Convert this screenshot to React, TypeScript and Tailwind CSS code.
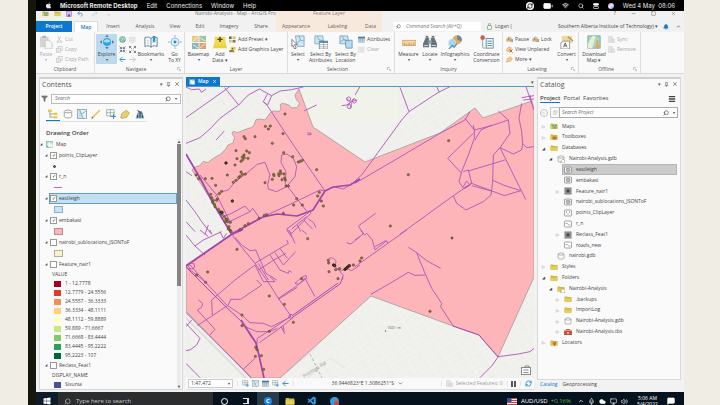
import React from "react";
import {
  Battery,
  ChevronDown,
  ChevronUp,
  Cloud,
  Minus,
  Monitor,
  Pin,
  RefreshCw,
  Search,
  Square,
  Volume2,
  Wifi,
  X,
  Filter,
  Menu,
  Bell,
  MessageSquare,
  Mic,
} from "lucide-react";
import { FaApple, FaWindows } from "react-icons/fa";
import { VscVscode } from "react-icons/vsc";

/* ---------- small drawings ---------- */

type Kind =
  | "paste" | "explore" | "bookmarks" | "goto" | "basemap" | "adddata" | "select" | "selattr" | "selloc"
  | "measure" | "locate" | "info" | "coord" | "convert" | "download" | "cut" | "copy" | "globe" | "zoomin"
  | "zoomout" | "back" | "fwd" | "preset" | "graphics" | "table" | "clear" | "label" | "labelx" | "labelmore"
  | "sync" | "maplet" | "tree" | "cylinder" | "polymap" | "pencil" | "gridplus" | "tag" | "chartmap"
  | "folder" | "foldermap" | "foldertool" | "folderhome" | "folderloc" | "polygon" | "raster" | "points"
  | "lines" | "toolbox" | "launcher" | "save" | "undo" | "redo" | "dbhome";

function Folder({ children }: { children?: React.ReactNode }) {
  return (
    <>
      <path d="M1 3h5l1 1h8v9H1z" fill="#cdb945" />
      <path d="M1 7h14v7H1z" fill="#e3cf58" />
      {children}
    </>
  );
}

function Cylinder({ color = "#8a8a8a" }: { color?: string }) {
  return (
    <g fill="#fafafa" stroke={color} strokeWidth="1.2">
      <path d="M2 4v8c0 3 12 3 12 0V4" />
      <ellipse cx="8" cy="4" rx="6" ry="2.2" />
    </g>
  );
}

const drawings: Record<Kind, React.ReactNode> = {
  paste: (
    <>
      <rect x="1" y="2" width="10" height="12" fill="#d4d4d4" />
      <rect x="4" y="1" width="4" height="2" fill="#aaa" />
      <path d="M7 6h5l3 3v7H7z" fill="#f5f5f5" stroke="#bbb" strokeWidth=".8" />
    </>
  ),
  explore: (
    <>
      <circle cx="8" cy="8" r="4.6" fill="#2ea3dd" />
      <path d="M4 7c2-3 6-3 8 0-2 2-6 2-8 0z" fill="#a5dcf5" />
      <path d="M8 0l2 2H6zM8 16l2-2H6zM0 8l2-2v4zM16 8l-2-2v4z" fill="#4a5560" />
    </>
  ),
  bookmarks: (
    <>
      <path d="M1 3c3-1 5-1 7 1 2-2 4-2 7-1v10c-3-1-5-1-7 1-2-2-4-2-7-1z" fill="#fff" stroke="#4a7894" />
      <path d="M8 4v10" stroke="#4a7894" />
      <path d="M10 1h3v8l-1.500-1.500L10 9z" fill="#3b8fc7" />
      <path d="M3 6h3M3 8h3M3 10h3" stroke="#aac" strokeWidth=".7" />
    </>
  ),
  goto: (
    <>
      <circle cx="8" cy="8" r="4.500" fill="#e6f3fb" stroke="#7cb5d8" />
      <circle cx="8" cy="8" r="1.700" fill="#2b8ac9" />
      <path d="M8 0v3M8 13v3M0 8h3M13 8h3" stroke="#7cb5d8" />
    </>
  ),
  basemap: (
    <>
      <rect x="0" y="1" width="7.500" height="7" fill="#e7c987" />
      <rect x="8.500" y="1" width="7.500" height="7" fill="#9fc4a6" />
      <rect x="0" y="9" width="7.500" height="7" fill="#87b4c4" />
      <rect x="8.500" y="9" width="7.500" height="7" fill="#e0a06c" />
      <path d="M1 7l6-5M9 3l6 4M1 11l6 4M9 15l6-5" stroke="#f8f2dc" />
    </>
  ),
  adddata: (
    <>
      <path d="M3 4h10l3 11H0z" fill="#ecd23c" />
      <path d="M2 2h12v10H2z" fill="#f0da50" />
      <path d="M8 2v6M5 5h6" stroke="#4a4a30" strokeWidth="1.700" />
    </>
  ),
  select: (
    <>
      <path d="M5 1h10v12H7z" fill="#cfe6f3" stroke="#6c98af" strokeWidth=".8" />
      <path d="M9 1l2 5 4 1M7 9l4-3" stroke="#6c98af" strokeWidth=".8" fill="none" />
      <path d="M1 5l6 6H4l2 4-2 1-1.500-4L1 13z" fill="#fff" stroke="#555" strokeWidth=".8" />
    </>
  ),
  selattr: (
    <>
      <path d="M1 1h9l1 9H1z" fill="#cfe6f3" stroke="#6c98af" strokeWidth=".8" />
      <path d="M4 1l1 4 6 2" stroke="#6c98af" strokeWidth=".8" fill="none" />
      <rect x="6" y="7" width="10" height="9" fill="#fff" stroke="#607c8c" strokeWidth=".8" />
      <path d="M6 8h10" stroke="#4c87a8" strokeWidth="2" />
      <path d="M6 11h10M6 13.500h10M11 9v7" stroke="#888" strokeWidth=".7" />
    </>
  ),
  selloc: (
    <>
      <path d="M1 1h9l1 9H1z" fill="#cfe6f3" stroke="#6c98af" strokeWidth=".8" />
      <path d="M7 6h8v9H8z" fill="#b6dcef" stroke="#4f8cad" strokeWidth=".8" />
      <path d="M4 1l1 4 6 2M1 8l5-3" stroke="#6c98af" strokeWidth=".8" fill="none" />
    </>
  ),
  measure: (
    <>
      <rect x="0" y="6" width="16" height="6" fill="#f1d3a6" stroke="#cf9c5e" strokeWidth=".8" />
      <path d="M2.500 9v3M5 10v2M8 9v3M10.500 10v2M13.500 9v3" stroke="#b27a3d" strokeWidth=".8" />
    </>
  ),
  locate: (
    <g fill="#68747c">
      <path d="M3 3h4v11H0v-4z" />
      <path d="M13 3H9v11h7v-4z" />
      <rect x="6" y="6" width="4" height="4" fill="#93a2ab" />
      <rect x="3" y="1" width="3" height="2" />
      <rect x="10" y="1" width="3" height="2" />
      <path d="M1 12h5M10 12h5" stroke="#dfe5e8" />
    </g>
  ),
  info: (
    <>
      <circle cx="10.500" cy="5.500" r="5.300" fill="#f0a54a" />
      <path d="M10.500 5.500V.2A5.300 5.300 0 0 1 15.500 7z" fill="#4b8cc2" />
      <circle cx="5" cy="9" r="4.500" fill="#a9d6ee" />
      <path d="M1 16l4-4 2 2 3-4" stroke="#4f9ac8" strokeWidth="1.500" fill="none" />
    </>
  ),
  coord: (
    <>
      <circle cx="3" cy="3" r="2.600" fill="#d35b3e" />
      <path d="M3 5v8c0 2 1 2 3 2" stroke="#7b98ac" fill="none" />
      <rect x="7" y="4" width="8" height="11" fill="#eef5f9" stroke="#5c87a1" />
      <path d="M8.500 7h5M8.500 9.500h5M8.500 12h5" stroke="#5c87a1" />
    </>
  ),
  convert: (
    <>
      <path d="M2 1h12v8H2z" fill="#ecd89c" />
      <path d="M9 2l6 5" stroke="#b89a4c" strokeWidth="1.500" />
      <path d="M1 9l3-2h7v9H1z" fill="#fff" stroke="#777" strokeWidth=".8" />
      <path d="M4 14l2-5 2 5M5 12.500h2" stroke="#444" strokeWidth=".9" fill="none" />
    </>
  ),
  download: (
    <>
      <rect x="1" y="1" width="14" height="14" fill="#a6d6c7" stroke="#5d988a" strokeWidth=".8" />
      <path d="M1 10l5-9h4l-4 14H1z" fill="#e7efd4" />
      <path d="M13 6v6h2l-3 4-3-4h2V6z" fill="#f1a23c" />
    </>
  ),
  cut: (
    <g fill="none" stroke="#b5b5b5" strokeWidth="1.400">
      <path d="M4 1l6 10M11 1L5 11" />
      <circle cx="4" cy="13" r="2" />
      <circle cx="11" cy="13" r="2" />
    </g>
  ),
  copy: (
    <g fill="#f4f4f4" stroke="#b9b9b9" strokeWidth="1.200">
      <rect x="5" y="1" width="9" height="10" />
      <rect x="1" y="5" width="9" height="10" />
      <path d="M3 9h5M3 12h5" />
    </g>
  ),
  globe: (
    <>
      <circle cx="8" cy="8" r="7" fill="#7fbfa5" stroke="#5d8f95" />
      <path d="M3 5c3-3 4 0 5 2s-2 4-3 5M11 3c0 4 2 5 3 6" stroke="#e8f4ea" strokeWidth="1.500" fill="none" />
    </>
  ),
  zoomin: <path d="M1 1l5 5M15 1l-5 5M1 15l5-5M15 15l-5-5M6 2v4H2M10 2v4h4M6 14v-4H2M10 14v-4h4" stroke="#4a4a4a" strokeWidth="1.500" fill="none" />,
  zoomout: <path d="M1 1l5 5M15 1l-5 5M1 15l5-5M15 15l-5-5M1 5V1h4M15 5V1h-4M1 11v4h4M15 11v4h-4" stroke="#4a4a4a" strokeWidth="1.500" fill="none" />,
  back: <path d="M15 8H2M8 2L2 8l6 6" stroke="#2c95d4" strokeWidth="2.200" fill="none" />,
  fwd: <path d="M1 8h13M8 2l6 6-6 6" stroke="#bdbdbd" strokeWidth="1.800" fill="none" />,
  preset: (
    <>
      <rect x="0" y="1" width="6" height="6" fill="#666" />
      <rect x="8" y="1" width="7" height="6" fill="#d9c55c" />
      <rect x="0" y="9" width="6" height="6" fill="#d9c55c" />
      <rect x="8" y="9" width="7" height="6" fill="#777" />
    </>
  ),
  graphics: (
    <>
      <path d="M4 2h11v8H4z" fill="#e8cf4d" />
      <path d="M1 9h9l3 5H0z" fill="#8d8750" />
      <path d="M8 4v4M6 6h4" stroke="#444" strokeWidth="1.200" />
    </>
  ),
  table: (
    <>
      <rect x="0" y="2" width="16" height="12" fill="#dfeaf1" stroke="#5f7f91" />
      <path d="M0 4h16" stroke="#3f6f8c" strokeWidth="3" />
      <path d="M0 9h16M5 5v9M10 5v9" stroke="#5f7f91" />
    </>
  ),
  clear: <path d="M1 3h13v11H1zM5 6h5v5H5z" stroke="#c3c3c3" fill="#f4f4f4" />,
  label: (
    <>
      <path d="M1 8l5-6 6 2-1 8H2z" fill="#efd08b" stroke="#b08c46" />
      <path d="M4 10l2-5 2 5M12 7v7M15 7v7" stroke="#555" strokeWidth="1.300" fill="none" />
    </>
  ),
  labelx: (
    <>
      <path d="M1 8l5-6 6 2-1 8H2z" fill="#efd08b" stroke="#b08c46" />
      <path d="M8 8l7 7M15 8l-7 7" stroke="#c8472f" strokeWidth="2" />
    </>
  ),
  labelmore: <path d="M1 14l2-8 7-4 5 4-5 6z" fill="#ecd08c" stroke="#b08c46" />,
  sync: <path d="M1 1h9v13H1zM7 7h8v8H7z" fill="#e3e3e3" stroke="#cdcdcd" />,
  maplet: (
    <>
      <rect x="1" y="1" width="14" height="14" fill="#b9dccb" stroke="#5f9990" />
      <path d="M2 10l5-8 3 5 5-3v10H8z" fill="#f4faf2" />
      <path d="M2 14V9l3 3z" fill="#69b088" />
    </>
  ),
  tree: (
    <>
      <path d="M3 5v8h6M3 8h6" stroke="#777" fill="none" />
      <rect x="0" y="1" width="6" height="4" fill="#eac63d" />
      <rect x="9" y="6" width="6" height="3.500" fill="#eac63d" />
      <rect x="9" y="11.500" width="6" height="3.500" fill="#eac63d" />
    </>
  ),
  cylinder: <Cylinder />,
  polymap: (
    <>
      <rect x="1" y="1" width="14" height="14" fill="#e5f1f8" stroke="#77848c" />
      <path d="M2 2l4 1 3 11H2z" fill="#c4dfee" />
      <path d="M4 1l3 7 8-5M7 8l3 7" stroke="#5c8cab" fill="none" />
    </>
  ),
  pencil: (
    <>
      <path d="M2 14L14 2" stroke="#e0c148" strokeWidth="2.400" />
      <path d="M1 15l2-2" stroke="#555" strokeWidth="2" />
    </>
  ),
  gridplus: (
    <>
      <path d="M1 1h12v10H1zM7 1v12M1 6h13" stroke="#7f8d97" fill="none" />
      <path d="M12 8v8M8 12h8" stroke="#3a8dc5" strokeWidth="1.600" />
    </>
  ),
  tag: <path d="M1 14l2-7 7-5 5 4-4 7-7 2z" fill="#ebcf6e" stroke="#b0924a" />,
  chartmap: (
    <>
      <path d="M1 15l4-12h6l4 12z" fill="#87a8b6" />
      <path d="M3 14V9h2v5M7 14V5h2v9M11 14v-4h2v4" fill="#385b70" />
      <path d="M4 2l8 6" stroke="#444" strokeWidth="1.600" />
    </>
  ),
  folder: <Folder />,
  foldermap: (
    <Folder>
      <rect x="5" y="6" width="8" height="7" fill="#5f9a6a" />
      <path d="M6 12l3-5 3 4" stroke="#fff" fill="none" />
    </Folder>
  ),
  foldertool: (
    <Folder>
      <rect x="5" y="7" width="8" height="6" fill="#cf6a2d" />
    </Folder>
  ),
  folderhome: (
    <Folder>
      <path d="M8 11l4-4 4 4v5H8z" fill="#fff" stroke="#666" />
    </Folder>
  ),
  folderloc: (
    <Folder>
      <circle cx="9" cy="9" r="3.500" fill="#cc6d3b" />
      <path d="M9 15l-2-4h4z" fill="#cc6d3b" />
    </Folder>
  ),
  polygon: (
    <>
      <rect x="1" y="2" width="14" height="12" rx="1.500" fill="#eee" stroke="#777" strokeWidth="1.300" />
      <path d="M5 5l6 0 1 5-5 2-2-3z" fill="#bbb" stroke="#777" />
    </>
  ),
  raster: (
    <>
      <rect x="1" y="1" width="14" height="14" fill="#777" />
      <path d="M1 4.500h14M1 8h14M1 11.500h14M4.500 1v14M8 1v14M11.500 1v14" stroke="#c9c9c9" strokeWidth=".8" />
      <rect x="5" y="5" width="6" height="6" fill="#444" />
    </>
  ),
  points: (
    <>
      <rect x="1" y="2" width="14" height="12" rx="1.500" fill="#fff" stroke="#777" strokeWidth="1.300" />
      <path d="M4 5h2v2H4zM10 5h2v2h-2zM7 9h2v2H7z" fill="#666" />
    </>
  ),
  lines: (
    <>
      <rect x="1" y="2" width="14" height="12" rx="1.500" fill="#fff" stroke="#777" strokeWidth="1.300" />
      <path d="M3 7h4l2 3h4" stroke="#666" fill="none" />
    </>
  ),
  toolbox: (
    <>
      <rect x="0" y="5" width="16" height="9" rx="1" fill="#cd4f38" />
      <path d="M5 5V3h6v2" stroke="#a83a28" strokeWidth="1.500" fill="none" />
      <rect x="6" y="8" width="4" height="3" fill="#f4d5cd" />
    </>
  ),
  launcher: <path d="M2 12V2h10M7 7l7 7M14 9v5H9" stroke="#777" strokeWidth="1.600" fill="none" />,
  save: (
    <>
      <rect x="1" y="1" width="14" height="14" fill="#d5c3ea" stroke="#7450a5" />
      <rect x="5" y="9" width="6" height="6" fill="#7450a5" />
    </>
  ),
  undo: <path d="M3 6h7c6 0 5 8 0 8M7 1L2 6l5 5" stroke="#3b93d1" strokeWidth="2.200" fill="none" />,
  redo: <path d="M13 6H6c-6 0-5 8 0 8M9 1l5 5-5 5" stroke="#b4d3e8" strokeWidth="2.200" fill="none" />,
  dbhome: (
    <>
      <Cylinder />
      <path d="M8 12l4-4 4 4v4H8z" fill="#fff" stroke="#9b6b3c" />
    </>
  ),
};

function Pic({ kind, className = "size-[7px]" }: { kind: Kind; className?: string }) {
  return (
    <svg viewBox="0 0 16 16" className={`shrink-0 ${className}`} aria-hidden="true">
      {drawings[kind]}
    </svg>
  );
}

/* ---------- macOS menu bar ---------- */

function MenuBar() {
  return (
    <header className="flex h-[11px] shrink-0 items-center bg-black pr-[9px] pl-[9px] font-['Inter','Noto_Sans',sans-serif] text-[6px] leading-[11px] text-[#e8e8e8]">
      <FaApple className="size-[7px] shrink-0" />
      <nav className="ml-[8px] flex gap-[9px] whitespace-nowrap">
        <button className="font-bold">Microsoft Remote Desktop</button>
        <button>Edit</button>
        <button>Connections</button>
        <button>Window</button>
        <button>Help</button>
      </nav>
      <div className="ml-auto flex items-center gap-[9px] whitespace-nowrap">
        <span className="flex size-[8px] items-center justify-center rounded-full bg-white text-black">
          <RefreshCw className="size-[6px]" strokeWidth={3} />
        </span>
        <Battery className="size-[10px]" fill="#fff" />
        <Wifi className="size-[7px]" strokeWidth={3} />
        <Search className="size-[6px]" strokeWidth={2.5} />
        <svg viewBox="0 0 16 16" className="size-[6px]" fill="none" stroke="#fff" strokeWidth="2">
          <rect x="1" y="1" width="14" height="5" rx="2.500" fill="#fff" />
          <rect x="1" y="9" width="14" height="6" rx="3" />
        </svg>
        <span className="size-[6px] rounded-full bg-linear-to-br from-[#e95fa0] via-[#e8e8ff] to-[#3f7ce0]" />
        <span>Wed 4 May&nbsp; 08:06</span>
      </div>
    </header>
  );
}

/* ---------- title and tab strip ---------- */

function Tab({ children, width }: { children: string; width: string }) {
  return <button className={`h-full text-center text-[#555] ${width}`}>{children}</button>;
}

function TitleAndTabs() {
  return (
    <div className="flex h-[21px] shrink-0 bg-[#f1f1f1] text-[5px] whitespace-nowrap">
      <div className="flex w-[240px] shrink-0 flex-col">
        <div className="flex h-[10px] items-start overflow-hidden pl-[6px] text-[#777]">
          <div className="flex h-[6px] items-end gap-[5px]">
            <Pic kind="foldermap" />
            <Pic kind="folder" />
            <Pic kind="save" className="size-[6px]" />
            <Pic kind="undo" className="size-[6px]" />
            <Pic kind="redo" className="ml-[4px] size-[6px]" />
            <ChevronDown className="ml-[4px] size-[4px]" />
          </div>
          <span className="ml-auto leading-[5px]">Nairobi-Analysis - Map - ArcGIS Pro</span>
        </div>
        <div className="flex h-[11px] leading-[11px]">
          <button className="w-[36px] bg-[#0b78d0] text-center font-semibold text-white">Project</button>
          <button className="ml-[2px] w-[24px] border border-b-0 border-[#dcdcdc] bg-white text-center font-semibold text-[#1478c8]">
            Map
          </button>
          <Tab width="w-[30px]">Insert</Tab>
          <Tab width="w-[34px]">Analysis</Tab>
          <Tab width="w-[26px]">View</Tab>
          <Tab width="w-[24px]">Edit</Tab>
          <Tab width="w-[34px]">Imagery</Tab>
          <Tab width="w-[30px]">Share</Tab>
        </div>
      </div>
      <div className="flex w-[106px] shrink-0 flex-col bg-[#f8e9dd]">
        <div className="h-[10px] overflow-hidden text-center leading-[5px] text-[#8a7d74]">Feature Layer</div>
        <div className="flex h-[11px] justify-between px-[6px] leading-[11px] text-[#666]">
          <button>Appearance</button>
          <button>Labeling</button>
          <button>Data</button>
        </div>
      </div>
      <div className="flex min-w-0 flex-1 flex-col">
        <div className="flex h-[10px] items-start justify-end gap-[15px] overflow-hidden pr-[8px] text-[#555]">
          <span className="leading-[5px]">?</span>
          <Minus className="size-[5px]" />
          <Square className="size-[5px]" />
          <X className="size-[5px]" />
        </div>
        <div className="flex h-[11px] items-center">
          <label className="ml-[11px] flex h-[9px] w-[88px] items-center gap-[5px] bg-white pl-[3px]">
            <Search className="size-[5px] shrink-0 -scale-x-100 text-[#555]" strokeWidth={2.5} />
            <input
              aria-label="Command Search"
              placeholder="Command Search (Alt+Q)"
              className="w-full min-w-0 bg-transparent italic outline-none placeholder:text-[#777]"
            />
          </label>
          <div className="ml-[6px] flex items-center gap-[3px] text-[#555]">
            <svg viewBox="0 0 10 14" className="h-[7px] w-[5px]" fill="none" stroke="#55a86c" strokeWidth="1.500">
              <circle cx="5" cy="3" r="2" />
              <rect x="1" y="5" width="8" height="8" rx="2" />
            </svg>
            Logan (
          </div>
          <div className="ml-auto flex items-center gap-[3px] pr-[3px] text-[#444]">
            <button>Southern Alberta Institute of Technology) ▾</button>
            <Bell className="ml-[2px] size-[6px] text-[#1478c8]" fill="#1478c8" />
            <ChevronUp className="ml-[4px] size-[5px]" strokeWidth={3} />
          </div>
        </div>
      </div>
    </div>
  );
}

/* ---------- ribbon ---------- */

function Group({ name, width, launcher, children }: { name: string; width: string; launcher?: boolean; children: React.ReactNode }) {
  return (
    <section className={`flex shrink-0 flex-col border-r border-[#dedede] ${width}`}>
      <div className="flex h-[33px] items-start pt-[2px]">{children}</div>
      <div className="flex h-[7px] items-center text-[#555]">
        <span className="flex-1 text-center">{name}</span>
        {launcher && <Pic kind="launcher" className="mr-[3px] size-[4px]" />}
      </div>
    </section>
  );
}

function Big({ kind, lines, width, active, muted, drop }: { kind: Kind; lines: string[]; width: string; active?: boolean; muted?: boolean; drop?: boolean }) {
  return (
    <button
      className={`flex h-[30px] shrink-0 flex-col items-center pt-px leading-[6px] ${width} ${active ? "bg-[#bcd9ee]" : ""} ${muted ? "text-[#aaa]" : "text-[#444]"}`}
    >
      <Pic kind={kind} className="mb-[2px] size-[14px]" />
      {lines.map((line) => (
        <span key={line}>{line}</span>
      ))}
      {drop && <span className="text-[4px] leading-[5px]">▾</span>}
    </button>
  );
}

function Small({ kind, label, muted }: { kind: Kind; label: string; muted?: boolean }) {
  return (
    <button className={`flex h-[10px] items-center gap-[2px] ${muted ? "text-[#aaa]" : "text-[#444]"}`}>
      <Pic kind={kind} />
      {label}
    </button>
  );
}

function Ribbon() {
  return (
    <div className="flex h-[42px] shrink-0 border-b border-[#d8d8d8] bg-[#f9f9f9] text-[5px] leading-[6px] whitespace-nowrap">
      <Group name="Clipboard" width="w-[59px]">
        <Big kind="paste" lines={["Paste"]} width="w-[20px]" muted drop />
        <div>
          <Small kind="cut" label="Cut" muted />
          <Small kind="copy" label="Copy" muted />
          <Small kind="copy" label="Copy Path" muted />
        </div>
      </Group>
      <Group name="Navigate" width="w-[90px]" launcher>
        <Big kind="explore" lines={["Explore"]} width="w-[21px] ml-px" active drop />
        <div className="grid h-[30px] w-[20px] grid-cols-2 place-items-center">
          <Pic kind="globe" />
          <Pic kind="clear" />
          <Pic kind="zoomin" />
          <Pic kind="zoomout" />
          <Pic kind="back" />
          <Pic kind="fwd" />
        </div>
        <Big kind="bookmarks" lines={["Bookmarks"]} width="w-[28px]" drop />
        <Big kind="goto" lines={["Go", "To XY"]} width="w-[19px]" />
      </Group>
      <Group name="Layer" width="w-[103px]">
        <Big kind="basemap" lines={["Basemap"]} width="w-[25px] ml-px" drop />
        <Big kind="adddata" lines={["Add", "Data ▾"]} width="w-[18px]" />
        <div>
          <Small kind="preset" label="Add Preset ▾" />
          <Small kind="graphics" label="Add Graphics Layer" />
        </div>
      </Group>
      <Group name="Selection" width="w-[107px]" launcher>
        <Big kind="select" lines={["Select"]} width="w-[20px]" drop />
        <Big kind="selattr" lines={["Select By", "Attributes"]} width="w-[25px]" />
        <Big kind="selloc" lines={["Select By", "Location"]} width="w-[25px]" />
        <div>
          <Small kind="table" label="Attributes" />
          <Small kind="clear" label="Clear" muted />
        </div>
      </Group>
      <Group name="Inquiry" width="w-[108px]">
        <Big kind="measure" lines={["Measure"]} width="w-[25px] ml-px" drop />
        <Big kind="locate" lines={["Locate"]} width="w-[18px]" drop />
        <Big kind="info" lines={["Infographics"]} width="w-[32px]" drop />
        <Big kind="coord" lines={["Coordinate", "Conversion"]} width="w-[31px]" />
      </Group>
      <Group name="Labeling" width="w-[76px]" launcher>
        <div className="ml-[3px] w-[49px]">
          <div className="flex gap-[3px]">
            <Small kind="label" label="Pause" />
            <Small kind="label" label="Lock" />
          </div>
          <Small kind="labelx" label="View Unplaced" />
          <Small kind="labelmore" label="More ▾" />
        </div>
        <Big kind="convert" lines={["Convert"]} width="w-[23px]" drop />
      </Group>
      <Group name="Offline" width="w-[62px]" launcher>
        <Big kind="download" lines={["Download", "Map ▾"]} width="w-[28px] ml-px" />
        <div>
          <Small kind="sync" label="Sync" muted />
          <Small kind="sync" label="Remove" muted />
        </div>
      </Group>
    </div>
  );
}

/* ---------- panels ---------- */

function PanelHeader({ title }: { title: string }) {
  return (
    <div className="flex h-[12px] shrink-0 items-center gap-[3px] border-t-2 border-[#cfcfcf] px-[2px] text-[#555]">
      <h2 className="mr-auto text-[7px] leading-[9px]">{title}</h2>
      <span className="text-[5px] leading-[6px]">▾</span>
      <Pin className="size-[5px]" strokeWidth={2.5} />
      <X className="size-[6px]" strokeWidth={2.5} />
    </div>
  );
}

function Layer({ name, checked, selected }: { name: string; checked?: boolean; selected?: boolean }) {
  return (
    <label className="flex h-[11px] items-center pl-[5px]">
      <span className="w-[4px] text-[3px] leading-[5px]">◢</span>
      <span
        className={`flex h-full items-center gap-[2px] border ${selected ? "flex-1 border-[#5f9fc8] bg-[#c3dff1]" : "border-transparent"}`}
      >
        <input
          type="checkbox"
          defaultChecked={checked}
          className="flex size-[7px] appearance-none items-center justify-center border border-[#999] bg-white text-[5px] leading-[5px] text-[#333] checked:after:content-['✓']"
        />
        {name}
      </span>
    </label>
  );
}

function Swatch({ className }: { className: string }) {
  return (
    <div className="flex h-[11px] items-center pl-[14px]">
      <span className={`h-[7px] w-[9px] border ${className}`} />
    </div>
  );
}

const classes: [string, string][] = [
  ["bg-[#a50026]", "1 - 12.7778"],
  ["bg-[#dc3d2d]", "12.7779 - 24.5556"],
  ["bg-[#f68e52]", "24.5557 - 36.3333"],
  ["bg-[#fdd07e]", "36.3334 - 48.1111"],
  ["bg-[#ffffbf]", "48.1112 - 59.8889"],
  ["bg-[#c7e77f]", "59.889 - 71.6667"],
  ["bg-[#85c966]", "71.6668 - 83.4444"],
  ["bg-[#2ea055]", "83.4445 - 95.2222"],
  ["bg-[#006837]", "95.2223 - 107"],
];

function Contents() {
  const tools: Kind[] = ["tree", "cylinder", "polymap", "pencil", "gridplus", "tag", "chartmap"];
  return (
    <aside className="ml-[3px] flex w-[144px] shrink-0 flex-col border border-t-0 border-[#d5d5d5] bg-[#fafafa] text-[5px] text-[#444]">
      <PanelHeader title="Contents" />
      <div className="mt-[4px] flex h-[11px] items-center gap-[3px] pr-px pl-px">
        <Filter className="size-[7px] shrink-0 text-[#777]" fill="#777" />
        <label className="flex h-[10px] flex-1 items-center border border-[#bcbcbc] bg-white px-[3px]">
          <input
            aria-label="Search contents"
            placeholder="Search"
            className="min-w-0 flex-1 bg-transparent italic outline-none placeholder:text-[#666]"
          />
          <Search className="size-[6px] -scale-x-100" strokeWidth={2.5} />
          <span className="ml-[4px] text-[4px]">▾</span>
        </label>
      </div>
      <div className="mt-[3px] ml-[6px] flex h-[15px] w-[101px] border-b border-[#e0e0e0]">
        {tools.map((t, i) => (
          <button
            key={t}
            aria-label={t}
            className={`flex flex-1 items-center justify-center border-b ${i === 0 ? "border-[#1478c8]" : "border-transparent"}`}
          >
            <Pic kind={t} className="size-[10px]" />
          </button>
        ))}
      </div>
      <h3 className="mt-[5px] ml-[6px] h-[12px] text-[6px] leading-[12px] font-semibold">Drawing Order</h3>
      <div className="flex min-h-0 flex-1">
        <div className="min-w-0 flex-1 overflow-hidden leading-[11px]">
          <div className="flex h-[11px] items-center gap-[2px]">
            <span className="w-[4px] text-[3px] leading-[5px]">◢</span>
            <Pic kind="maplet" />
            <span className="ml-px">Map</span>
          </div>
          <Layer name="points_ClipLayer" checked />
          <div className="flex h-[10px] items-center pl-[13px]">
            <span className="size-[3px] rounded-full border border-[#333] bg-[#7a6a3a]" />
          </div>
          <Layer name="r_n" checked />
          <div className="flex h-[11px] items-center pl-[14px]">
            <span className="h-px w-[8px] bg-[#c060c8]" />
          </div>
          <Layer name="eastleigh" checked selected />
          <Swatch className="border-[#8ab0c8] bg-[#c9e4f8]" />
          <Layer name="embakasi" checked />
          <Swatch className="border-[#b88a8e] bg-[#fdb4ba]" />
          <Layer name="nairobi_sublocations_JSONToF" />
          <Swatch className="border-[#b5ad94] bg-[#fbf3c8]" />
          <Layer name="Feature_nair1" />
          <div className="h-[9px] pl-[12px] leading-[9px]">VALUE</div>
          <ul className="leading-[9px]">
            {classes.map(([color, range]) => (
              <li key={range} className="flex h-[9px] items-center gap-[4px] pl-[14px]">
                <span className={`h-[6px] w-[7px] ${color}`} />
                {range}
              </li>
            ))}
          </ul>
          <Layer name="Reclass_Feat1" />
          <div className="h-[9px] pl-[12px] leading-[9px]">DISPLAY_NAME</div>
          <div className="flex items-start gap-[4px] pl-[14px] leading-[9px]">
            <span className="mt-[2px] h-[6px] w-[7px] bg-[#4c5290]" />
            Sixunia
          </div>
        </div>
        <div className="mr-px flex w-[4px] shrink-0 flex-col items-center bg-[#ececec] text-[4px] leading-[5px]">
          <span>▲</span>
          <span className="h-[142px] w-[4px] bg-[#858585]" />
          <span className="mt-auto">▼</span>
        </div>
      </div>
    </aside>
  );
}

/* ---------- map ---------- */

const roadsNorthWest = [
  "M18 36L35 44L58 42L64 52L78 42",
  "M18 128L75 88L140 42L150 34",
  "M134 38L176 90L205 60L238 42L275 62L263 90L250 80L262 58",
  "M275 62L300 48L335 44L370 36",
  "M18 205L60 188L90 162L120 130L150 108L176 90",
  "M108 195L133 168",
  "M250 80L262 92L340 210L435 348",
  "M305 240L320 237L340 250L350 275L345 305L320 335L290 350L265 342L263 328L270 300L255 262L232 268L200 295L165 320L145 345L118 352L105 365",
  "M305 240L303 262L318 290L316 325L350 370L380 408",
  "M155 478L235 432L330 388L420 345L435 348",
  "M460 335L490 342L540 312",
  "M60 300L110 360L150 440",
  "M130 425L155 415L195 393L210 410L218 400L238 428M148 440L210 410",
  "M372 108L410 90",
  "M382 174L393 174L393 179L382 179",
  "M320 462L370 425L390 408L393 415L335 475L320 462M335 462L380 425",
  "M372 435L385 450L398 462M385 432L400 442L408 458M352 450L362 470",
  "M18 375L45 410L65 440L95 478M18 440L45 470M75 478L85 450",
  "M18 290L36 302",
  "M485 92L500 90L515 80L530 75M500 70L515 85L510 100M505 90L522 70",
];

const roadsNorthEast = [
  "M135 37L162 110",
  "M285 35L250 52L162 110L140 135L60 245L20 300L0 318",
  "M245 35L253 52",
  "M0 325L120 255L255 175L330 135L345 110",
  "M330 130L358 165L358 190L340 240L320 290L312 320L325 340L350 325L340 285L325 290",
  "M355 150L358 165L410 152L460 135L430 108M460 135L465 175L435 218L415 240L413 320L408 360L385 380L333 405L305 385L295 362",
  "M135 478L295 362L350 325",
  "M355 175L278 250L318 293",
  "M360 195L378 165L410 150",
  "M340 288L450 255",
  "M435 218L512 373",
  "M350 325L448 362L497 347L450 332L413 316M350 332L410 348",
  "M325 335L335 318L345 330L330 340",
  "M435 218L475 237L500 225L503 205L500 170L492 130L500 85M503 205L515 218L537 215",
  "M513 35L537 105M500 68L537 62M505 75L537 72M525 60L530 85",
  "M62 415L10 453L28 480L35 475",
  "M15 35L0 60",
];

const roadsSouthWest = [
  "M155 0L160 20L180 45L225 100L270 165L295 205L333 258",
  "M165 22L185 45L210 62L227 60L245 100L258 130L290 150",
  "M225 100L325 40L320 30M235 120L285 88L318 70M225 105L250 155L285 155L270 140M270 75L300 120L325 130L327 122L335 127M285 68L310 105L347 65M300 55L322 85M235 100L265 150",
  "M320 0L335 20M327 0L345 40M365 0L380 12",
  "M225 105L165 150L95 210L97 255",
  "M30 105L75 155L140 225L185 255L210 278L250 280L275 290L333 260",
  "M52 287L145 225L152 208L182 208L245 165L230 150",
  "M55 210L68 220L65 232L52 240L105 298L90 315",
  "M75 155L18 110",
  "M185 285L230 305L268 305L292 295",
  "M230 350L232 325L290 288L333 258M238 338L292 300L340 262",
  "M295 205L350 168L375 145L405 200M295 208L352 172M345 160L365 142L378 136L380 145L355 163z",
  "M18 248L190 418L213 443M190 418L225 385",
  "M18 280L60 325L50 345L30 360L18 362M18 290L35 270M18 400L60 443",
  "M18 15L45 48L70 30L125 5M45 48L75 75M60 0L85 20M90 0L95 12M120 5L130 25L140 10",
  "M310 288L313 312M303 290L311 305",
  "M500 38L512 42L540 20",
  "M445 95C440 80 465 80 468 95L465 110L480 125L490 135L485 150M470 115L485 122L500 115L515 122L540 105",
];

const roadsSouthEast = [
  "M35 10L52 30L60 60M60 60L95 32L98 40M0 30L25 12L18 0M60 50L92 32",
  "M0 110L155 0",
  "M160 52L185 68L215 92L257 115",
  "M185 68L210 130L230 175L260 220L257 230L295 288",
  "M48 193L105 160L160 127L180 136L210 135",
  "M430 380L490 372L525 365L537 355M430 380L410 408L375 443",
];

const trunkRoads = [
  "M186 154L200 178L213 203L231.500 234",
  "M231.500 234L263 217L277 214L297 216L313 210L325 191L333 187L350 185L360 179",
  "M186 266L231.500 234.500L243 229.500",
  "M241 320L256 343L260 360L264 378",
];

const dualRoads = [
  "M186 267L200 281L225 306L242 322L252 338",
  "M293 317L340 284L343 277",
  "M293 315L338 283",
  "M453 326L479 335L498 357",
];

const northDots: [number, number][] = [
  [315, 117], [256, 154], [271, 153], [265, 162], [192, 185], [196, 191], [225, 185], [277, 205], [309, 176],
  [311, 233], [338, 245], [355, 261], [361, 259], [367, 256], [410, 284], [168, 227], [200, 228], [208, 233],
  [192, 240], [187, 246], [193, 248], [204, 250], [183, 259], [171, 251], [165, 270], [188, 254], [142, 300],
  [76, 311], [96, 310], [56, 311], [107, 331], [183, 291], [187, 298], [196, 297], [180, 304], [176, 308],
  [168, 316], [160, 322], [281, 298], [296, 296], [301, 288], [303, 295], [312, 297], [297, 302], [277, 313],
  [306, 314], [314, 309], [316, 315], [255, 323], [318, 333], [325, 333], [92, 358], [118, 356], [125, 349],
  [112, 372], [95, 368], [48, 300], [98, 382], [103, 388], [350, 371], [341, 390], [367, 390], [310, 415],
  [418, 352], [413, 363], [424, 378], [430, 393], [260, 419], [253, 421], [237, 430], [205, 446], [195, 452],
  [180, 464], [115, 403], [120, 410], [127, 412], [133, 425], [138, 432], [143, 440], [147, 455], [150, 465],
  [110, 376], [100, 376], [105, 395], [136, 440], [141, 434], [126, 418], [151, 442], [145, 462], [282, 302],
  [685, 299], [806, 197], [631, 453],
];

const southDots: [number, number][] = [
  [171, 58], [50, 135], [83, 126], [77, 157], [268, 198], [313, 223], [186, 255], [186, 287], [268, 304],
  [340, 277], [227, 352], [231, 359], [226, 379], [244, 377], [251, 418], [383, 26], [365, 146], [447, 125],
  [445, 91], [446, 99], [474, 146], [479, 116], [520, 105], [540, 93], [545, 84], [152, 4], [467, 119], [816, 24],
  [750, 244],
];

const denseDots: [number, number][] = [
  [138, 264], [157, 378], [124, 412], [461, 570], [464, 572], [495, 583], [499, 580], [503, 576], [508, 572],
];

function MapCanvas() {
  return (
    <svg viewBox="186 87 348 291" preserveAspectRatio="xMidYMid slice" className="h-0 min-h-0 w-full flex-1 bg-[#efefeb]" role="img" aria-label="Map view">
      <defs>
        <pattern id="streets" width="17" height="11" patternUnits="userSpaceOnUse" patternTransform="rotate(-32)">
          <path d="M0 1h17M2 1v10M10 5v6M0 6h9" stroke="#f5f5f3" strokeWidth=".6" fill="none" />
        </pattern>
      </defs>
      <rect x="186" y="87" width="348" height="291" fill="#efefec" />
      <path d="M300 87h98v33l-40 3-20 35-25-31z" fill="#f1f2ea" />
      <path d="M313 127l26-5 59-2-20 30-13 12z" fill="#f1f1f0" />
      <rect x="186" y="87" width="120" height="291" fill="url(#streets)" />
      <rect x="400" y="87" width="134" height="60" fill="url(#streets)" />
      <rect x="300" y="290" width="234" height="88" fill="url(#streets)" />
      <path d="M186 318L246 378M186 312L252 378" stroke="#dadad4" strokeWidth="1.500" />
      <path d="M310 354l6 12 6 12" stroke="#b5b5b5" strokeDasharray="3 2" fill="none" />
      <path d="M280 378L318 346M308 378L330 358L345 368" stroke="#e2e2e0" fill="none" />
      <path
        d="M299 89L295 95L296 99L299.500 103.500L297 107.500L292 108L289.500 105.500L286 104L281.500 103.500L280 105L281 108L279.500 111.500L273 111L270.500 112.500L268 116L265 120L260 119L256 119.500L254 125L251.500 127.500L245 129.500L238 132.500L233 131.500L232 133.500L234.500 137.500L233 143L228 145L225 150L220 154.500L213 158.500L208 162.500L203 161.500L200 165.500L194 167.500L192 170L213 203L231.500 234L186 265V311L251 378H280L371 296L453 326L479 335L498 357L534 277V108L532 101L483 118L475 108L440 133L365 162L313 127z"
        fill="#feb5b9"
        stroke="#a39a98"
        strokeWidth=".8"
      />
      <g fill="none" stroke="#af55b9" strokeWidth="2.700" strokeLinejoin="round">
        <g transform="translate(180 75) scale(.33333)">
          {roadsNorthWest.map((d) => <path key={d} d={d} />)}
          <circle cx="506" cy="72" r="6" />
          <circle cx="523" cy="78" r="6" />
          <circle cx="508" cy="95" r="6" />
        </g>
        <g transform="translate(355 75) scale(.33333)">
          {roadsNorthEast.map((d) => <path key={d} d={d} />)}
        </g>
        <g transform="translate(180 230) scale(.33333)">
          {roadsSouthWest.map((d) => <path key={d} d={d} />)}
          <circle cx="35" cy="108" r="9" />
          <circle cx="333" cy="259" r="6" />
        </g>
        <g transform="translate(355 230) scale(.33333)">
          {roadsSouthEast.map((d) => <path key={d} d={d} />)}
        </g>
      </g>
      <g fill="none" stroke="#a145b0" strokeWidth="1.700" strokeLinejoin="round">
        {trunkRoads.map((d) => <path key={d} d={d} />)}
      </g>
      <g fill="none" stroke="#a74bb3" strokeWidth="1" strokeLinejoin="round">
        {dualRoads.map((d) => <path key={d} d={d} />)}
      </g>
      <g fill="#8b7440" stroke="#403820" strokeWidth="1.300">
        <g transform="translate(180 75) scale(.33333)">
          {northDots.map(([x, y], i) => <circle key={i} cx={x} cy={y} r="3.600" />)}
        </g>
        <g transform="translate(180 230) scale(.33333)">
          {southDots.map(([x, y], i) => <circle key={i} cx={x} cy={y} r="3.600" />)}
        </g>
      </g>
      <g transform="translate(180 75) scale(.33333)" fill="#5d4d25" stroke="#1c1708" strokeWidth="2.600">
        {denseDots.map(([x, y], i) => <circle key={i} cx={x} cy={y} r="3.600" />)}
      </g>
      <text x="387" y="329" fontSize="4" fill="#666">1601 m</text>
      <circle cx="385.500" cy="331" r=".7" fill="#555" />
      <text x="304" y="378" fontSize="5" fill="#999" transform="rotate(-32 304 378)">Prestige Rd</text>
      <g fill="#fff" stroke="#888">
        <rect x="521.500" y="367.500" width="9" height="7" />
        <path d="M523.500 370h5M523.500 372.500h5M525 367v-1h4v1" />
      </g>
    </svg>
  );
}

function MapView() {
  return (
    <main className="ml-[3px] flex min-w-0 flex-1 flex-col text-[5px] text-[#444]">
      <div className="flex h-[10px] items-center border-b border-[#4f9bd0]">
        <div className="flex h-full w-[34px] items-center gap-[3px] bg-[#0b78d0] px-[3px] font-semibold text-white">
          <Pic kind="maplet" className="size-[6px]" />
          Map
          <button aria-label="Close map" className="ml-auto">
            <X className="size-[5px]" strokeWidth={3} />
          </button>
        </div>
        <span className="ml-auto leading-[6px]">▾</span>
      </div>
      <MapCanvas />
      <div className="flex h-[12px] shrink-0 items-center gap-[3px] border-b border-[#ddd] bg-[#f9f9f9] px-[2px] whitespace-nowrap">
        <div className="flex h-[9px] w-[45px] items-center border border-[#ccc] bg-white px-[2px]">
          <select aria-label="Map scale" className="min-w-0 flex-1 appearance-none bg-transparent">
            <option>1:47,472</option>
          </select>
          <span className="text-[4px]">▾</span>
        </div>
        <span className="text-[#bbb]">|</span>
        <Pic kind="gridplus" />
        <Pic kind="polymap" />
        <Pic kind="table" />
        <Pic kind="gridplus" />
        <Pic kind="back" />
        <span className="text-[#bbb]">|</span>
        <button className="mx-auto flex items-center gap-[4px]">
          36.9446823°E 1.3086251°S <ChevronDown className="size-[5px]" strokeWidth={3} />
        </button>
        <span className="text-[#bbb]">|</span>
        <Pic kind="sync" />
        <span className="text-[#999]">Selected Features: 0</span>
        <span className="text-[#bbb]">|</span>
        <span className="h-[6px] w-[5px] border-x-2 border-[#555]" />
        <span className="text-[#bbb]">|</span>
        <RefreshCw className="size-[7px] text-[#2c8fd0]" strokeWidth={3} />
      </div>
    </main>
  );
}

/* ---------- catalog ---------- */

type Node = { name: string; kind: Kind; indent: string; arrow?: "open" | "closed"; selected?: boolean };

const level = ["pl-[4px]", "pl-[11px]", "pl-[18px]"];

const nodes: Node[] = [
  { name: "Maps", kind: "foldermap", indent: level[0], arrow: "closed" },
  { name: "Toolboxes", kind: "foldertool", indent: level[0], arrow: "closed" },
  { name: "Databases", kind: "folder", indent: level[0], arrow: "open" },
  { name: "Nairobi-Analysis.gdb", kind: "dbhome", indent: level[1], arrow: "open" },
  { name: "eastleigh", kind: "polygon", indent: level[2], selected: true },
  { name: "embakasi", kind: "polygon", indent: level[2] },
  { name: "Feature_nair1", kind: "raster", indent: level[2], arrow: "closed" },
  { name: "nairobi_sublocations_JSONToF", kind: "polygon", indent: level[2] },
  { name: "points_ClipLayer", kind: "points", indent: level[2] },
  { name: "r_n", kind: "lines", indent: level[2] },
  { name: "Reclass_Feat1", kind: "raster", indent: level[2], arrow: "closed" },
  { name: "roads_new", kind: "lines", indent: level[2] },
  { name: "nairobi.gdb", kind: "cylinder", indent: level[1] },
  { name: "Styles", kind: "folder", indent: level[0], arrow: "closed" },
  { name: "Folders", kind: "folder", indent: level[0], arrow: "open" },
  { name: "Nairobi-Analysis", kind: "folderhome", indent: level[1], arrow: "open" },
  { name: ".backups", kind: "folder", indent: level[2], arrow: "closed" },
  { name: "ImportLog", kind: "folder", indent: level[2], arrow: "closed" },
  { name: "Nairobi-Analysis.gdb", kind: "cylinder", indent: level[2], arrow: "closed" },
  { name: "Nairobi-Analysis.tbx", kind: "toolbox", indent: level[2], arrow: "closed" },
  { name: "Locators", kind: "folderloc", indent: level[0], arrow: "closed" },
];

function Catalog() {
  return (
    <aside className="mr-[3px] ml-[3px] flex w-[144px] shrink-0 flex-col text-[5px] text-[#444]">
      <div className="flex min-h-0 flex-1 flex-col border border-t-0 border-[#d9d9d9] bg-[#fafafa]">
        <PanelHeader title="Catalog" />
        <nav className="mt-[4px] flex h-[11px] items-center gap-[3px] px-[2px] text-[6px] leading-[8px]">
          <button className="border-b border-[#1478c8] font-semibold">Project</button>
          <button className="border-b border-transparent">Portal</button>
          <button className="border-b border-transparent">Favorites</button>
          <Menu className="mr-[2px] ml-auto size-[8px]" strokeWidth={4} />
        </nav>
        <div className="mt-[3px] flex h-[11px] items-center gap-[2px] pr-[2px] pl-[2px]">
          <button aria-label="Back" className="flex size-[8px] items-center justify-center rounded-full border border-[#c5c5c5]">
            <Pic kind="fwd" className="size-[4px] rotate-180" />
          </button>
          <div className="flex h-[11px] flex-1">
            <button aria-label="Home" className="flex w-[9px] items-center justify-center border border-r-0 border-[#c5c5c5]">
              <Pic kind="copy" className="size-[5px]" />
            </button>
            <label className="flex flex-1 items-center border border-[#aaa] bg-white px-[2px]">
              <input
                aria-label="Search Project"
                placeholder="Search Project"
                className="min-w-0 flex-1 bg-transparent italic outline-none placeholder:text-[#666]"
              />
              <Search className="size-[6px] -scale-x-100" strokeWidth={2.5} />
              <span className="ml-[4px] text-[4px]">▾</span>
            </label>
          </div>
        </div>
        <ul className="mt-[3px] flex h-[227px] flex-col">
          {nodes.map((n, i) => (
            <li key={i} className={`flex flex-1 items-center pr-[3px] whitespace-nowrap ${n.indent}`}>
              <span className="w-[6px] shrink-0 text-[4px] leading-[5px]">
                {n.arrow === "open" ? "◢" : n.arrow === "closed" ? "▷" : ""}
              </span>
              <span className={`flex h-full flex-1 items-center gap-[4px] border pl-px ${n.selected ? "border-[#b5b5b5] bg-[#cbcbcb]" : "border-transparent"}`}>
                <Pic kind={n.kind} className="size-[8px]" />
                {n.name}
              </span>
            </li>
          ))}
        </ul>
      </div>
      <nav className="flex h-[10px] shrink-0 items-center gap-[5px] pl-[3px]">
        <button className="text-[#1478c8]">Catalog</button>
        <button>Geoprocessing</button>
      </nav>
    </aside>
  );
}

/* ---------- taskbar ---------- */

function Taskbar() {
  return (
    <footer className="h-[13px] shrink-0 overflow-hidden bg-[#06131e] text-white">
      <div className="flex h-[18px] items-center text-[5px] whitespace-nowrap">
        <button aria-label="Start" className="flex h-full w-[22px] items-center justify-center bg-[#0c1c28]">
          <FaWindows className="size-[8px]" />
        </button>
        <label className="flex h-full w-[155px] items-center gap-[5px] bg-[#2b2d2f] pl-[6px]">
          <Search className="size-[7px] -scale-x-100 text-[#ccc]" />
          <input
            aria-label="Taskbar search"
            placeholder="Type here to search"
            className="min-w-0 flex-1 bg-transparent text-[6px] outline-none placeholder:text-[#c8c8c8]"
          />
        </label>
        <div className="flex h-full">
          <button aria-label="Cortana" className="flex w-[22px] items-center justify-center">
            <span className="size-[7px] rounded-full border border-white" />
          </button>
          <button aria-label="Task view" className="flex w-[22px] items-center justify-center">
            <span className="h-[6px] w-[6px] border-y border-r-2 border-[#ddd]" />
          </button>
          <button aria-label="ArcGIS Pro" className="flex w-[22px] items-center justify-center bg-[#2b3a48]">
            <span className="flex size-[8px] items-center justify-center rounded-full bg-[#1a86e8] text-[6px] leading-[6px] font-bold">C</span>
          </button>
          <button aria-label="File Explorer" className="flex w-[22px] items-center justify-center">
            <Pic kind="folder" className="size-[10px]" />
          </button>
          <button aria-label="Code" className="flex w-[22px] items-center justify-center">
            <VscVscode className="size-[10px] text-[#2f9fe8]" />
          </button>
          <button aria-label="Browser" className="flex w-[22px] items-center justify-center">
            <span className="flex size-[9px] items-end justify-end rounded-full bg-[#3d9ad8]">
              <span className="size-[5px] rounded-full bg-[#d9432f]" />
            </span>
          </button>
        </div>
        <div className="ml-auto flex items-center gap-[4px] pr-[9px]">
          <svg viewBox="0 0 20 14" className="h-[7px] w-[10px]">
            <rect width="20" height="14" fill="#e8e8e8" />
            <path d="M0 1h20M0 5h20M0 9h20M0 13h20" stroke="#c14a50" strokeWidth="2" />
            <rect width="9" height="8" fill="#3c4f8c" />
          </svg>
          <span className="text-[6px]">
            AUD/USD&nbsp; <span className="text-[#4fb64b]">+0.16%</span>
          </span>
          <ChevronUp className="ml-[3px] size-[6px]" strokeWidth={3} />
          <Mic className="size-[7px]" />
          <Cloud className="size-[7px]" fill="#fff" />
          <Monitor className="size-[7px]" />
          <Volume2 className="size-[7px]" />
          <div className="mx-[4px] w-[23px] self-start text-center leading-[6px]">
            <div>5:06 AM</div>
            <div>5/4/2022</div>
          </div>
          <MessageSquare className="size-[8px]" fill="#fff" />
        </div>
      </div>
    </footer>
  );
}

export default function App() {
  return (
    <div className="flex h-screen w-full overflow-hidden bg-[#efede4] pr-[36px] pl-[28px] font-['Open_Sans','Noto_Sans',sans-serif]">
      <div className="flex min-w-0 flex-1 flex-col border-l-8 border-[#15170d] bg-[#f2f2f2]">
        <MenuBar />
        <TitleAndTabs />
        <Ribbon />
        <div className="mt-[3px] mb-[2px] flex min-h-0 flex-1">
          <Contents />
          <MapView />
          <Catalog />
        </div>
        <Taskbar />
      </div>
    </div>
  );
}
